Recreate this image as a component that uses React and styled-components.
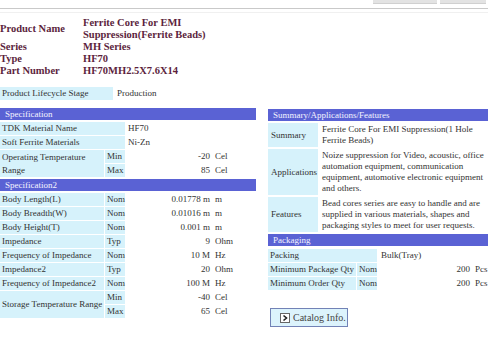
import React from "react";
import styled, { createGlobalStyle } from "styled-components";

const serif = `"Liberation Serif", "Times New Roman", Times, "DejaVu Serif", serif`;

const GlobalStyle = createGlobalStyle`
  html, body {
    margin: 0;
    padding: 0;
    background: #fff;
  }
  body {
    font-family: ${serif};
    color: #333;
    width: 500px;
    height: 342px;
    overflow: hidden;
  }
`;

const Page = styled.div`
  width: 488px;
  font-family: ${serif};
`;

const TopBar = styled.div`
  height: 8px;
  border-bottom: 1px solid #c9c9c9;
  display: flex;
  justify-content: flex-end;
  align-items: flex-start;
  gap: 3px;
  padding-right: 2px;
`;

const TopButton = styled.div`
  width: ${(p) => p.$w}px;
  height: 3px;
  background: #e3e3e3;
  border-bottom: 1px solid #d0d0d0;
`;

const FaintLine = styled.div`
  margin-top: 3px;
  border-top: 1px solid #f0f0f0;
`;

const ProductHead = styled.div`
  display: grid;
  grid-template-columns: 83px 1fr;
  margin-top: 4px;
  font-weight: bold;
  font-size: 10.5px;
  line-height: 12px;
  color: #5c1f3d;
`;

const HeadLabel = styled.div`
  align-self: center;
`;

const Lifecycle = styled.div`
  display: flex;
  margin-top: 10px;
  font-size: 9px;
  line-height: 13px;
`;

const LifeLabel = styled.div`
  width: 111px;
  padding-left: 2px;
  background: #d6f2fb;
`;

const LifeValue = styled.div`
  padding-left: 4px;
`;

const Columns = styled.div`
  display: flex;
  gap: 12px;
  margin-top: 8px;
  align-items: flex-start;
`;

const Column = styled.div`
  width: ${(p) => p.$w}px;
  display: flex;
  flex-direction: column;
`;

const SectionBar = styled.div`
  height: 12px;
  line-height: 12px;
  padding-left: 5px;
  background: #5a62d4;
  color: #f4f4ff;
  font-size: 9px;
  margin-top: ${(p) => p.$top || 0}px;
`;

const DataGrid = styled.div`
  display: grid;
  grid-template-columns: ${(p) => p.$cols};
  grid-auto-rows: 13px;
  gap: 1px;
  margin-top: ${(p) => p.$top ?? 2}px;
  font-size: 9px;
  line-height: 13px;
`;

const Cell = styled.div`
  display: flex;
  align-items: center;
  padding-left: ${(p) => p.$pad ?? 2}px;
  background: ${(p) => (p.$shade ? "#d6f2fb" : "transparent")};
  grid-column: span ${(p) => p.$span || 1};
  grid-row: span ${(p) => p.$rows || 1};
`;

const Num = styled.span`
  width: ${(p) => p.$w}px;
  text-align: right;
  white-space: nowrap;
`;

const Unit = styled.span`
  margin-left: 5px;
`;

const SummaryGrid = styled.div`
  display: grid;
  grid-template-columns: 50px 1fr;
  gap: 2px;
  margin-top: 2px;
  font-size: 9px;
  line-height: 11px;
`;

const SumLabel = styled.div`
  display: flex;
  align-items: center;
  padding-left: 3px;
  background: #d6f2fb;
`;

const SumText = styled.div`
  padding: 1px 0 1px 2px;
`;

const CatalogButton = styled.button`
  display: flex;
  align-items: center;
  gap: 3px;
  width: 78px;
  height: 19px;
  margin: 18px 0 0 2px;
  padding: 0 0 0 9px;
  border: 1px solid #7282b6;
  background: #dcf3fc;
  color: #444;
  font-family: ${serif};
  font-size: 10px;
  cursor: pointer;
`;

const ArrowIcon = () => (
  <svg width="10" height="10" viewBox="0 0 10 10">
    <rect x="0.5" y="0.5" width="9" height="9" fill="#fff" stroke="#666" />
    <path d="M3.5 2.5 L6.5 5 L3.5 7.5" fill="none" stroke="#222" strokeWidth="1.6" />
  </svg>
);

const Value = ({ num, unit, w = 84 }) => (
  <Cell $pad={0}>
    <Num $w={w}>{num}</Num>
    <Unit>{unit}</Unit>
  </Cell>
);

const spec2 = [
  ["Body Length(L)", "Nom", "0.01778 m", "m"],
  ["Body Breadth(W)", "Nom", "0.01016 m", "m"],
  ["Body Height(T)", "Nom", "0.001 m", "m"],
  ["Impedance", "Typ", "9", "Ohm"],
  ["Frequency of Impedance", "Nom", "10 M", "Hz"],
  ["Impedance2", "Typ", "20", "Ohm"],
  ["Frequency of Impedance2", "Nom", "100 M", "Hz"],
];

export default function App() {
  return (
    <Page>
      <GlobalStyle />
      <TopBar>
        <TopButton $w={64} />
        <TopButton $w={46} />
      </TopBar>
      <FaintLine />

      <ProductHead>
        <HeadLabel>Product Name</HeadLabel>
        <div>
          Ferrite Core For EMI
          <br />
          Suppression(Ferrite Beads)
        </div>
        <HeadLabel>Series</HeadLabel>
        <div>MH Series</div>
        <HeadLabel>Type</HeadLabel>
        <div>HF70</div>
        <HeadLabel>Part Number</HeadLabel>
        <div>HF70MH2.5X7.6X14</div>
      </ProductHead>

      <Lifecycle>
        <LifeLabel>Product Lifecycle Stage</LifeLabel>
        <LifeValue>Production</LifeValue>
      </Lifecycle>

      <Columns>
        <Column $w={256}>
          <SectionBar>Specification</SectionBar>
          <DataGrid $cols="104px 20px 1fr">
            <Cell $shade $span={2}>TDK Material Name</Cell>
            <Cell>HF70</Cell>
            <Cell $shade $span={2}>Soft Ferrite Materials</Cell>
            <Cell>Ni-Zn</Cell>
            <Cell $shade $rows={2}>Operating Temperature Range</Cell>
            <Cell $shade>Min</Cell>
            <Value num="-20" unit="Cel" />
            <Cell $shade>Max</Cell>
            <Value num="85" unit="Cel" />
          </DataGrid>

          <SectionBar $top={2}>Specification2</SectionBar>
          <DataGrid $cols="104px 20px 1fr">
            {spec2.map(([label, q, num, unit]) => (
              <React.Fragment key={label}>
                <Cell $shade>{label}</Cell>
                <Cell $shade>{q}</Cell>
                <Value num={num} unit={unit} />
              </React.Fragment>
            ))}
            <Cell $shade $rows={2}>Storage Temperature Range</Cell>
            <Cell $shade>Min</Cell>
            <Value num="-40" unit="Cel" />
            <Cell $shade>Max</Cell>
            <Value num="65" unit="Cel" />
          </DataGrid>
        </Column>

        <Column $w={220}>
          <SectionBar $top={1}>Summary/Applications/Features</SectionBar>
          <SummaryGrid>
            <SumLabel>Summary</SumLabel>
            <SumText>Ferrite Core For EMI Suppression(1 Hole Ferrite Beads)</SumText>
            <SumLabel>Applications</SumLabel>
            <SumText>
              Noize suppression for Video, acoustic, office automation equipment,
              communication equipment, automotive electronic equipment and others.
            </SumText>
            <SumLabel>Features</SumLabel>
            <SumText>
              Bead cores series are easy to handle and are supplied in various
              materials, shapes and packaging styles to meet for user requests.
            </SumText>
          </SummaryGrid>

          <SectionBar $top={2}>Packaging</SectionBar>
          <DataGrid $cols="88px 20px 1fr" $top={3}>
            <Cell $shade $span={2}>Packing</Cell>
            <Cell $pad={3}>Bulk(Tray)</Cell>
            <Cell $shade>Minimum Package Qty</Cell>
            <Cell $shade>Nom</Cell>
            <Value num="200" unit="Pcs" w={92} />
            <Cell $shade>Minimum Order Qty</Cell>
            <Cell $shade>Nom</Cell>
            <Value num="200" unit="Pcs" w={92} />
          </DataGrid>

          <CatalogButton>
            <ArrowIcon />
            Catalog Info.
          </CatalogButton>
        </Column>
      </Columns>
    </Page>
  );
}
